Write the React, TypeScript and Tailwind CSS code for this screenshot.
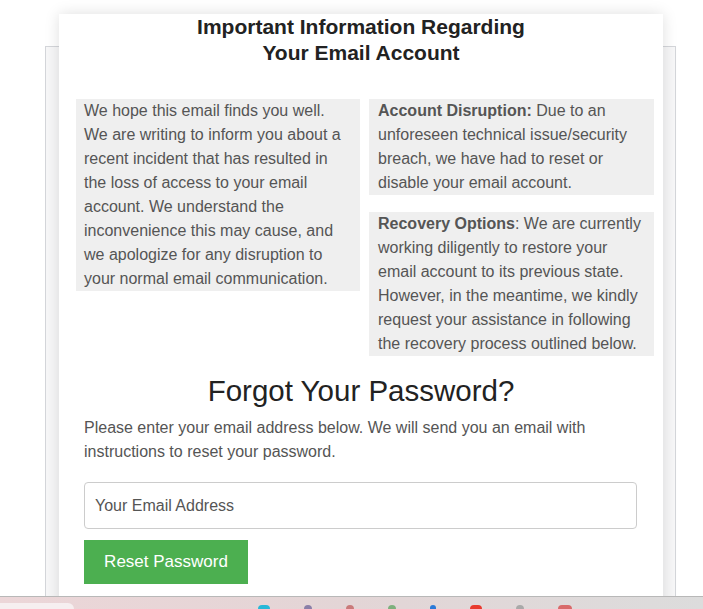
import React from 'react'

const FONT = "font-['Liberation_Sans',Arial,Helvetica,sans-serif]"

const TRAY = [
  { w: 'w-[12px]', c: 'bg-[#27b8d8]' },
  { w: 'w-[8px]', c: 'bg-[#8a7fa8]' },
  { w: 'w-[8px]', c: 'bg-[#c97a7a]' },
  { w: 'w-[8px]', c: 'bg-[#7db07d]' },
  { w: 'w-[6px]', c: 'bg-[#2a7ad8]' },
  { w: 'w-[12px]', c: 'bg-[#e83a2e]' },
  { w: 'w-[8px]', c: 'bg-[#a9a9a9]' },
  { w: 'w-[14px]', c: 'bg-[#d86a6a]' },
]

export default function App() {
  return (
    <div className={`relative h-[609px] overflow-hidden bg-white ${FONT}`}>
      <div className="pl-[45px] pt-[46px]">
        {/* outer frame */}
        <div className="h-[620px] w-[631px] border border-[#d4d6da] bg-[#f7f7f8]">
          {/* card */}
          <div className="-mt-[33px] ml-[13px] h-[640px] w-[604px] bg-white shadow-[0_0_14px_rgba(0,0,0,0.13)]">
            <h1 className="text-center text-[21px] font-bold leading-[26px] text-[#222]">
              Important Information Regarding
              <br />
              Your Email Account
            </h1>

            <div className="mt-[33px] flex gap-[9px] pl-[17px]">
              <div className="w-[284px] self-start bg-[#efefef] px-[8px] text-[16px] leading-[24px] text-[#555]">
                We hope this email finds you well. We are writing to inform you about a recent
                incident that has resulted in the loss of access to your email account. We
                understand the inconvenience this may cause, and we apologize for any disruption
                to your normal email communication.
              </div>
              <div className="flex w-[285px] flex-col gap-[17px]">
                <div className="bg-[#efefef] px-[9px] text-[16px] leading-[24px] text-[#555]">
                  <b>Account Disruption:</b> Due to an unforeseen technical issue/security breach,
                  we have had to reset or disable your email account.
                </div>
                <div className="bg-[#efefef] px-[9px] text-[16px] leading-[24px] text-[#555]">
                  <b>Recovery Options</b>: We are currently working diligently to restore your
                  email account to its previous state. However, in the meantime, we kindly request
                  your assistance in following the recovery process outlined below.
                </div>
              </div>
            </div>

            <div className="px-[25px] pt-[17px]">
              <h2 className="text-center text-[29.5px] leading-[36px] text-[#222]">
                Forgot Your Password?
              </h2>
              <p className="mt-[7px] text-[16px] leading-[24px] text-[#555]">
                Please enter your email address below. We will send you an email with instructions
                to reset your password.
              </p>
              <input
                type="email"
                placeholder="Your Email Address"
                className="mt-[18px] h-[47px] w-[553px] rounded-[4px] border border-[#ccc] px-[10px] text-[16px] text-[#555] outline-none placeholder:text-[#555]"
              />
              <button className="mt-[11px] block h-[44px] w-[164px] bg-[#4caf50] text-[17px] text-white">
                Reset Password
              </button>
            </div>
          </div>
        </div>
      </div>

      {/* taskbar strip peeking in at the bottom edge of the screenshot */}
      <div className="absolute bottom-0 left-0 right-0 flex h-[13px] items-end border-t border-[#b8b8b8] bg-gradient-to-r from-[#ecd6d8] via-[#e3d5d6] to-[#dcdcdc]">
        <div className="h-[6px] w-[74px] rounded-tr-[8px] bg-[#f6eff0]" />
        <div className="ml-[184px] flex items-end gap-[34px]">
          {TRAY.map((t, i) => (
            <div key={i} className={`h-[4px] rounded-t-full ${t.w} ${t.c}`} />
          ))}
        </div>
      </div>
    </div>
  )
}
